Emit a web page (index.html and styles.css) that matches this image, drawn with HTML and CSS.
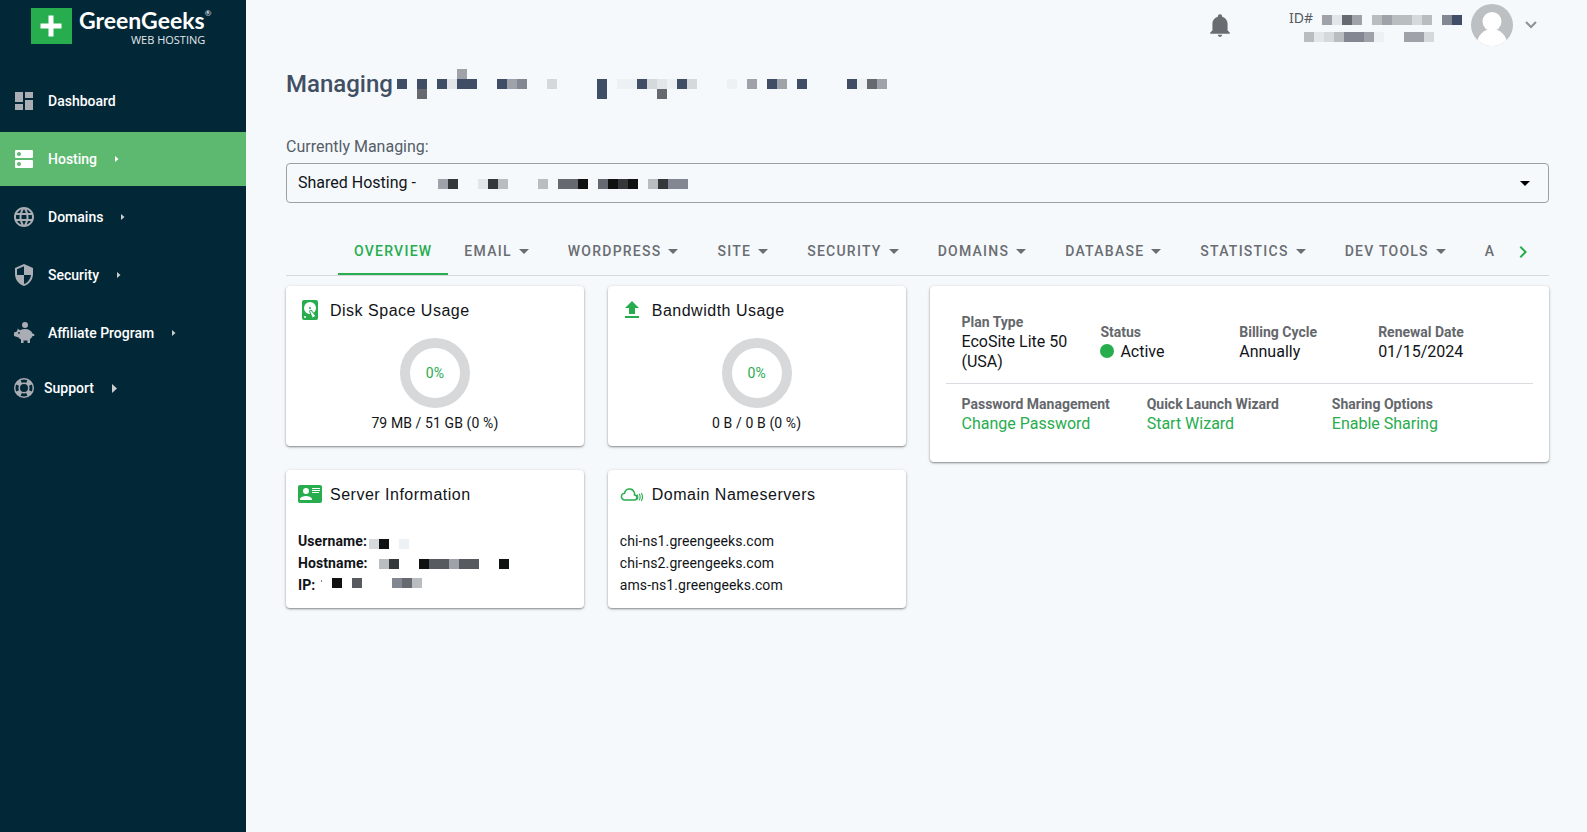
FILE: index.html
```html
<!DOCTYPE html>
<html lang="en">
<head>
<meta charset="utf-8">
<meta name="viewport" content="width=device-width, initial-scale=1">
<title>GreenGeeks – Hosting</title>
<link rel="stylesheet" href="styles.css">
</head>
<body>
<div class="app">
  <aside class="sidebar">
    <a class="brand" href="#">
      <svg class="brand-mark" viewBox="0 0 41 36" aria-hidden="true"><rect width="41" height="36" fill="#27ac4e"/><path d="M17.500 7.500h5v8h8v5h-8v8h-5v-8h-8v-5h8z" fill="#fff"/></svg>
      <span class="brand-text">
        <span class="brand-name">GreenGeeks<span class="brand-reg">®</span></span>
        <span class="brand-sub">WEB HOSTING</span>
      </span>
    </a>
    <nav class="menu">
      <a class="menu-item" href="#">
        <svg class="icon" viewBox="0 0 24 24"><path d="M3 13h8V3H3v10zm0 8h8v-6H3v6zm10 0h8V11h-8v10zm0-18v6h8V3h-8z"/></svg>
        <span>Dashboard</span>
      </a>
      <a class="menu-item active" href="#">
        <svg class="icon" viewBox="0 0 24 24"><path fill-rule="evenodd" d="M4 3h16a1 1 0 0 1 1 1v6a1 1 0 0 1-1 1H4a1 1 0 0 1-1-1V4a1 1 0 0 1 1-1zM7 5a2 2 0 1 0 0 4 2 2 0 0 0 0-4zM4 13h16a1 1 0 0 1 1 1v6a1 1 0 0 1-1 1H4a1 1 0 0 1-1-1v-6a1 1 0 0 1 1-1zM7 15a2 2 0 1 0 0 4 2 2 0 0 0 0-4z"/></svg>
        <span>Hosting</span>
        <svg class="arrow" viewBox="0 0 4 6"><path d="M0 0l3.500 3L0 6z"/></svg>
      </a>
      <a class="menu-item" href="#">
        <svg class="icon" viewBox="0 0 24 24"><path d="M11.990 2C6.470 2 2 6.480 2 12s4.470 10 9.990 10C17.520 22 22 17.520 22 12S17.520 2 11.990 2zm6.930 6h-2.950c-.32-1.250-.78-2.450-1.380-3.560 1.840.63 3.370 1.910 4.330 3.560zM12 4.040c.83 1.200 1.480 2.530 1.910 3.960h-3.820c.43-1.430 1.080-2.760 1.910-3.960zM4.260 14C4.100 13.360 4 12.690 4 12s.1-1.360.26-2h3.380c-.08.66-.14 1.320-.14 2 0 .68.06 1.340.14 2H4.260zm.82 2h2.950c.32 1.250.78 2.450 1.380 3.560-1.840-.63-3.370-1.900-4.330-3.560zm2.950-8H5.080c.96-1.660 2.490-2.930 4.330-3.560C8.810 5.550 8.350 6.750 8.030 8zM12 19.960c-.83-1.200-1.480-2.530-1.910-3.960h3.820c-.43 1.430-1.080 2.760-1.910 3.960zM14.340 14H9.660c-.09-.66-.16-1.320-.16-2 0-.68.07-1.350.16-2h4.680c.09.65.16 1.320.16 2 0 .68-.07 1.340-.16 2zm.25 5.560c.6-1.110 1.060-2.310 1.380-3.560h2.950c-.96 1.650-2.490 2.930-4.330 3.560zM16.360 14c.08-.66.14-1.320.14-2 0-.68-.06-1.340-.14-2h3.380c.16.64.26 1.310.26 2s-.1 1.360-.26 2h-3.380z"/></svg>
        <span>Domains</span>
        <svg class="arrow" viewBox="0 0 4 6"><path d="M0 0l3.500 3L0 6z"/></svg>
      </a>
      <a class="menu-item" href="#">
        <svg class="icon" viewBox="0 0 24 24"><path d="M12 1L3 5v6c0 5.550 3.840 10.740 9 12 5.160-1.260 9-6.450 9-12V5l-9-4zm0 10.990h7c-.53 4.120-3.280 7.790-7 8.940V12H5V6.300l7-3.110v8.800z"/></svg>
        <span>Security</span>
        <svg class="arrow" viewBox="0 0 4 6"><path d="M0 0l3.500 3L0 6z"/></svg>
      </a>
      <a class="menu-item" href="#">
        <svg class="icon" viewBox="0 0 24 24"><circle cx="13" cy="4" r="3"/><path fill-rule="evenodd" d="M5.500 7.500 8 9.200C9.500 8.400 11.200 8 13 8c3.600 0 6.600 1.800 7.500 4.500l1.800.7V15h-1.800c-.5 1.400-1.500 2.400-2.500 3.100V22h-2.500v-2.500h-4V22H9v-3.500c-1-.6-1.800-1.300-2.400-2.100L2 15v-3.500l2.500-.8C4.800 10 5.200 9.500 5.700 9zM7 11a.9.900 0 1 0 0 1.800A.9.900 0 0 0 7 11z"/></svg>
        <span>Affiliate Program</span>
        <svg class="arrow" viewBox="0 0 4 6"><path d="M0 0l3.500 3L0 6z"/></svg>
      </a>
      <a class="menu-item compact" href="#">
        <svg class="icon" viewBox="0 0 24 24"><path d="M19.790 15.410C20.740 13.240 20.740 10.750 19.790 8.590L17.050 9.830C17.650 11.210 17.650 12.780 17.060 14.170L19.790 15.410M15.420 4.210C13.250 3.260 10.760 3.260 8.590 4.210L9.830 6.940C11.220 6.350 12.790 6.350 14.180 6.950L15.420 4.210M4.210 8.580C3.260 10.760 3.260 13.240 4.210 15.420L6.950 14.170C6.350 12.790 6.350 11.210 6.950 9.820L4.210 8.580M8.590 19.790C10.760 20.740 13.250 20.740 15.420 19.780L14.180 17.050C12.800 17.650 11.220 17.650 9.840 17.060L8.590 19.790M12 2A10 10 0 0 1 22 12A10 10 0 0 1 12 22A10 10 0 0 1 2 12A10 10 0 0 1 12 2M12 8A4 4 0 0 0 8 12A4 4 0 0 0 12 16A4 4 0 0 0 16 12A4 4 0 0 0 12 8Z"/></svg>
        <span>Support</span>
        <svg class="arrow big" viewBox="0 0 5 9"><path d="M0 0l5 4.500L0 9z"/></svg>
      </a>
    </nav>
  </aside>

  <main class="main">
    <header class="topbar">
      <button class="icon-button bell" type="button" aria-label="Notifications">
        <svg viewBox="0 0 24 24"><path d="M21 19v1H3v-1l2-2v-6c0-3.100 2.030-5.830 5-6.710V4a2 2 0 0 1 4 0v.29c2.970.88 5 3.610 5 6.710v6l2 2m-7 2a2 2 0 0 1-4 0"/></svg>
      </button>
      <div class="account">
        <div class="account-id">ID#
          <svg class="mosaic" width="140" height="10"><rect class="g4" width="10" height="10"/><rect class="g1" x="10" width="10" height="10"/><rect class="g6" x="20" width="10" height="10"/><rect class="g4" x="30" width="10" height="10"/><rect class="g3" x="50" width="10" height="10"/><rect class="g4" x="60" width="10" height="10"/><rect class="g3" x="70" width="20" height="10"/><rect class="g2" x="90" width="10" height="10"/><rect class="g3" x="100" width="10" height="10"/><rect class="g5" x="120" width="10" height="10"/><rect class="navy" x="130" width="10" height="10"/></svg>
        </div>
        <svg class="mosaic account-name" width="130" height="10"><rect class="g3" width="10" height="10"/><rect class="g1" x="10" width="10" height="10"/><rect class="g2" x="20" width="10" height="10"/><rect class="g3" x="30" width="10" height="10"/><rect class="g5" x="40" width="20" height="10"/><rect class="g4" x="60" width="10" height="10"/><rect class="g0" x="70" width="10" height="10"/><rect class="g4" x="100" width="20" height="10"/><rect class="g2" x="120" width="10" height="10"/></svg>
      </div>
      <button class="icon-button profile" type="button" aria-label="Account menu">
        <svg class="avatar" viewBox="0 0 42 42"><clipPath id="face"><circle cx="21" cy="21" r="21"/></clipPath><g clip-path="url(#face)"><rect width="42" height="42" fill="#bdc0c2"/><circle cx="21" cy="17.500" r="9.500" fill="#fff"/><ellipse cx="21" cy="40" rx="15" ry="15" fill="#fff"/></g></svg>
        <svg class="chevron" viewBox="0 0 12 8"><path d="M1 1l5 5 5-5"/></svg>
      </button>
    </header>

    <div class="content">
      <h1 class="page-title">Managing
        <svg class="mosaic" width="490" height="30"><g class="navy"><rect y="10" width="10" height="10"/><rect x="20" y="10" width="10" height="10"/><rect x="40" y="10" width="10" height="10"/><rect x="60" y="10" width="20" height="10"/><rect x="100" y="10" width="10" height="10"/><rect x="200" y="10" width="10" height="20"/><rect x="240" y="10" width="10" height="10"/><rect x="280" y="10" width="10" height="10"/><rect x="370" y="10" width="10" height="10"/><rect x="400" y="10" width="10" height="10"/><rect x="450" y="10" width="10" height="10"/></g><g class="g6"><rect x="20" y="20" width="10" height="10"/><rect x="260" y="20" width="10" height="10"/><rect x="470" y="10" width="10" height="10"/></g><g class="g4"><rect x="60" width="10" height="10"/><rect x="110" y="10" width="10" height="10"/><rect x="350" y="10" width="10" height="10"/><rect x="380" y="10" width="10" height="10"/><rect x="480" y="10" width="10" height="10"/></g><rect class="g5" x="120" y="10" width="10" height="10"/><g class="g2"><rect x="150" y="10" width="10" height="10"/><rect x="250" y="10" width="10" height="10"/><rect x="290" y="10" width="10" height="10"/></g><rect class="g1" x="50" y="10" width="10" height="10"/><rect class="g1" x="260" y="10" width="10" height="10"/><g class="g0"><rect x="220" y="10" width="20" height="10"/><rect x="270" y="10" width="10" height="10"/><rect x="330" y="10" width="10" height="10"/><rect x="460" y="10" width="10" height="10"/></g></svg>
      </h1>

      <label class="picker-label" for="service">Currently Managing:</label>
      <div class="picker">
        <select id="service" class="picker-select"><option>Shared Hosting -</option></select>
        <svg class="mosaic picker-mask" width="250" height="10"><rect class="g4" width="10" height="10"/><rect class="k1" x="10" width="10" height="10"/><rect class="g1" x="40" width="10" height="10"/><rect class="k1" x="50" width="10" height="10"/><rect class="g3" x="60" width="10" height="10"/><rect class="g3" x="100" width="10" height="10"/><rect class="g6" x="120" width="20" height="10"/><rect class="k0" x="140" width="10" height="10"/><rect class="g6" x="160" width="10" height="10"/><rect class="k0" x="170" width="10" height="10"/><rect class="k1" x="180" width="10" height="10"/><rect class="k0" x="190" width="10" height="10"/><rect class="g3" x="210" width="10" height="10"/><rect class="k1" x="220" width="10" height="10"/><rect class="g5" x="230" width="20" height="10"/></svg>
        <svg class="picker-caret" viewBox="0 0 10 5"><path d="M0 0h10L5 5z"/></svg>
      </div>

      <nav class="tabs">
        <div class="tab-strip">
          <button class="tab selected" type="button">OVERVIEW</button>
          <button class="tab" type="button">EMAIL<svg class="caret" viewBox="0 0 24 24"><path d="M7 10l5 5 5-5z"/></svg></button>
          <button class="tab" type="button">WORDPRESS<svg class="caret" viewBox="0 0 24 24"><path d="M7 10l5 5 5-5z"/></svg></button>
          <button class="tab" type="button">SITE<svg class="caret" viewBox="0 0 24 24"><path d="M7 10l5 5 5-5z"/></svg></button>
          <button class="tab" type="button">SECURITY<svg class="caret" viewBox="0 0 24 24"><path d="M7 10l5 5 5-5z"/></svg></button>
          <button class="tab" type="button">DOMAINS<svg class="caret" viewBox="0 0 24 24"><path d="M7 10l5 5 5-5z"/></svg></button>
          <button class="tab" type="button">DATABASE<svg class="caret" viewBox="0 0 24 24"><path d="M7 10l5 5 5-5z"/></svg></button>
          <button class="tab" type="button">STATISTICS<svg class="caret" viewBox="0 0 24 24"><path d="M7 10l5 5 5-5z"/></svg></button>
          <button class="tab" type="button">DEV TOOLS<svg class="caret" viewBox="0 0 24 24"><path d="M7 10l5 5 5-5z"/></svg></button>
          <button class="tab" type="button">A</button>
        </div>
        <button class="tab-next" type="button" aria-label="More tabs"><svg viewBox="0 0 24 24"><path d="M8.590 16.590L13.170 12 8.590 7.410 10 6l6 6-6 6-1.410-1.410z"/></svg></button>
      </nav>

      <div class="cards">
        <section class="card">
          <h2 class="card-title"><svg class="icon" viewBox="0 0 24 24"><path d="M6 2H18A2 2 0 0 1 20 4V20A2 2 0 0 1 18 22H6A2 2 0 0 1 4 20V4A2 2 0 0 1 6 2M12 4A6 6 0 0 0 6 10C6 13.310 8.690 16 12.100 16L11.220 13.770C10.950 13.290 11.110 12.680 11.590 12.400L12.450 11.900C12.930 11.630 13.540 11.790 13.820 12.270L15.740 14.690C17.120 13.590 18 11.900 18 10A6 6 0 0 0 12 4M12 9A1 1 0 0 1 13 10A1 1 0 0 1 12 11A1 1 0 0 1 11 10A1 1 0 0 1 12 9M7 18A1 1 0 0 0 6 19A1 1 0 0 0 7 20A1 1 0 0 0 8 19A1 1 0 0 0 7 18M12.090 13.270L14.580 19.580L17.170 18.080L12.950 12.770L12.090 13.270Z"/></svg>Disk Space Usage</h2>
          <div class="gauge">0%</div>
          <p class="usage">79 MB / 51 GB (0 %)</p>
        </section>

        <section class="card">
          <h2 class="card-title"><svg class="icon" viewBox="0 0 24 24"><path d="M9 16V10H5L12 3L19 10H15V16H9M5 20V18H19V20H5Z"/></svg>Bandwidth Usage</h2>
          <div class="gauge">0%</div>
          <p class="usage">0 B / 0 B (0 %)</p>
        </section>

        <section class="card plan">
          <div class="plan-row four">
            <div><h3>Plan Type</h3><p>EcoSite Lite 50 (USA)</p></div>
            <div><h3>Status</h3><p class="status"><span class="dot"></span>Active</p></div>
            <div><h3>Billing Cycle</h3><p>Annually</p></div>
            <div><h3>Renewal Date</h3><p>01/15/2024</p></div>
          </div>
          <div class="plan-row three">
            <div><h3>Password Management</h3><a href="#">Change Password</a></div>
            <div><h3>Quick Launch Wizard</h3><a href="#">Start Wizard</a></div>
            <div><h3>Sharing Options</h3><a href="#">Enable Sharing</a></div>
          </div>
        </section>

        <section class="card">
          <h2 class="card-title"><svg class="icon" viewBox="0 0 24 24"><path fill-rule="evenodd" d="M2 3h20a2 2 0 0 1 2 2v14a2 2 0 0 1-2 2H2a2 2 0 0 1-2-2V5a2 2 0 0 1 2-2zM14 6v1h8V6zM14 8v1h8V8zM14 10v1h7v-1zM8 6a3 3 0 1 0 0 6 3 3 0 0 0 0-6zM2 17v1h12v-1c0-2-4-3.100-6-3.100S2 15 2 17z"/></svg>Server Information</h2>
          <dl class="details">
            <div><dt>Username:</dt><dd><svg class="mosaic" width="40" height="22"><rect class="g2" y="9" width="10" height="10"/><rect class="k0" x="10" y="9" width="10" height="10"/><rect class="g0" x="30" y="9" width="10" height="10"/></svg></dd></div>
            <div><dt>Hostname:</dt><dd><svg class="mosaic" width="140" height="22"><rect class="g3" x="9" y="7" width="10" height="10"/><rect class="k1" x="19" y="7" width="10" height="10"/><rect class="k0" x="49" y="7" width="10" height="10"/><rect class="g7" x="59" y="7" width="20" height="10"/><rect class="g4" x="79" y="7" width="10" height="10"/><rect class="g7" x="89" y="7" width="20" height="10"/><rect class="k0" x="129" y="7" width="10" height="10"/></svg></dd></div>
            <div><dt>IP:</dt><dd><svg class="mosaic" width="108" height="22"><rect class="g5" x="4" y="6" width="1" height="2"/><rect class="k0" x="15" y="4" width="10" height="10"/><rect class="g7" x="35" y="4" width="10" height="10"/><rect class="g5" x="75" y="4" width="10" height="10"/><rect class="g6" x="85" y="4" width="10" height="10"/><rect class="g3" x="95" y="4" width="10" height="10"/></svg></dd></div>
          </dl>
        </section>

        <section class="card">
          <h2 class="card-title"><svg class="icon line" viewBox="0 0 24 24"><path d="M15 18H5a3.400 3.400 0 0 1-.4-6.800 5 5 0 0 1 9.500-1.200c.5.900.6 1.900.4 2.900a2.600 2.600 0 0 1 .5 5.100z"/><path d="M17.200 12.500c.8 1.500.8 3.500 0 5M19.300 11.700c1.100 2.100 1.100 4.500 0 6.600M21.400 11c1.400 2.600 1.400 5.400 0 8" stroke-width="1.100"/></svg>Domain Nameservers</h2>
          <ul class="nameservers">
            <li>chi-ns1.greengeeks.com</li>
            <li>chi-ns2.greengeeks.com</li>
            <li>ams-ns1.greengeeks.com</li>
          </ul>
        </section>
      </div>
    </div>
  </main>
</div>
</body>
</html>
```
FILE: styles.css
```css
:root {
  --green: #27ac4e;
  --ink: #111418;
  --slate: #414f63;
  --muted: #6a6d72;
  --page: #f5f9fc;
}

* { box-sizing: border-box; }

body {
  margin: 0;
  background: var(--page);
  color: var(--ink);
  font-family: Roboto, "Liberation Sans", sans-serif;
  font-size: 14px;
  line-height: 20px;
}

h1, h2, h3, p, ul, dl, dd { margin: 0; padding: 0; }
a { color: inherit; text-decoration: none; }
button { padding: 0; border: 0; background: none; color: inherit; font: inherit; }
svg { display: block; flex: none; }

.app { display: flex; min-height: 100vh; }

/* Sidebar */
.sidebar { flex: 0 0 246px; background: #022838; color: #fff; }
.brand { display: flex; gap: 7px; height: 74px; padding: 8px 0 0 31px; }
.brand-mark { width: 41px; height: 36px; }
.brand-text { display: flex; flex-direction: column; align-items: flex-end; font-family: "Open Sans", "Noto Sans", sans-serif; }
.brand-name { display: flex; font-family: Lato, "Open Sans", sans-serif; font-size: 23px; line-height: 25px; font-weight: 700; }
.brand-reg { font-size: 8px; line-height: 10px; font-weight: 400; }
.brand-sub { padding: 1px 6px 0 0; font-size: 11px; line-height: 12px; color: #e4e7e9; }

.menu { display: flex; flex-direction: column; gap: 4px; }
.menu-item { display: flex; align-items: center; height: 54px; padding-left: 12px; font-weight: 500; }
.menu-item.active { background: #5db970; }
.menu-item.compact { height: 48px; }
.icon { width: 24px; height: 24px; margin-right: 12px; fill: #abadb5; }
.active .icon, .active .arrow { fill: #fff; }
.compact .icon { margin-right: 8px; }
.arrow { width: 4px; height: 6px; margin-left: 18px; fill: #c9cdd0; }
.arrow.big { width: 5px; height: 9px; }

/* Top bar */
.main { flex: 1; min-width: 0; }
.topbar { display: flex; justify-content: flex-end; height: 50px; padding-right: 50px; }
.icon-button { display: flex; align-items: center; }
.bell svg { width: 26px; height: 26px; fill: #696c70; }
.account { margin-left: 56px; padding-top: 8px; color: #565a60; font-family: "Noto Sans", sans-serif; }
.account-id { display: flex; align-items: center; gap: 9px; }
.account-id .mosaic { margin-top: 4px; }
.account-name { margin: 4px 0 0 15px; }
.profile { gap: 12px; margin-left: 9px; }
.avatar { width: 42px; height: 42px; }
.chevron { width: 12px; height: 8px; fill: none; stroke: #8d9196; stroke-width: 2; }

/* Page content */
.content { padding: 19px 38px 40px 40px; }
.page-title { display: flex; align-items: center; gap: 4px; height: 30px; color: var(--slate); font-size: 24px; font-weight: 500; }
.picker-label { display: block; margin-top: 38px; color: #565d68; font-size: 16px; }
.picker { position: relative; margin-top: 6px; }
.picker-select { appearance: none; display: block; width: 100%; height: 40px; padding: 0 11px; border: 1px solid #9da0a4; border-radius: 4px; background: transparent; color: var(--ink); font: inherit; font-size: 16px; }
.picker-mask { position: absolute; left: 152px; top: 16px; pointer-events: none; }
.picker-caret { position: absolute; right: 19px; top: 18px; width: 10px; height: 5px; pointer-events: none; }

/* Tabs */
.tabs { display: flex; height: 48px; margin-top: 25px; padding-left: 52px; border-bottom: 1px solid #d5d9dd; }
.tab-strip { display: flex; flex: 1; min-width: 0; overflow: hidden; }
.tab { display: flex; flex: none; align-items: center; padding: 0 16px; border-bottom: 2px solid transparent; color: var(--muted); font-weight: 500; letter-spacing: 1.25px; }
.tab.selected { border-color: var(--green); color: var(--green); }
.caret { width: 24px; height: 24px; fill: var(--muted); }
.tab-next { display: flex; align-items: center; justify-content: center; width: 52px; }
.tab-next svg { width: 24px; height: 24px; fill: var(--green); }

/* Cards */
.cards { display: grid; grid-template-columns: repeat(12, minmax(0, 1fr)); gap: 24px; align-items: start; margin-top: 10px; }
.card { grid-column: span 3; padding: 12px; border-radius: 4px; background: #fff; box-shadow: 0 1px 2px rgba(0, 0, 0, .4), 0 1px 4px rgba(0, 0, 0, .1); letter-spacing: 0.1px; }
.card-title { display: flex; align-items: flex-start; height: 24px; font-family: "Liberation Sans", sans-serif; font-size: 16px; line-height: 26px; font-weight: 400; letter-spacing: 0.5px; }
.card-title .icon { margin-right: 8px; fill: var(--green); }
.card-title .icon.line { fill: none; stroke: var(--green); stroke-width: 1.5; }
.gauge { display: flex; align-items: center; justify-content: center; width: 70px; height: 70px; margin: 16px auto 4px; border: 10px solid #d6d8da; border-radius: 50%; color: var(--green); }
.usage { line-height: 22px; text-align: center; }

.plan { grid-column: span 6; grid-row: span 2; padding: 12px 16px 28px; letter-spacing: 0; }
.plan-row { display: grid; align-items: center; padding: 14px 16px 11px; }
.plan-row h3 { color: #64676c; font-size: 14px; font-weight: 700; }
.plan-row p, .plan-row a { font-size: 16px; }
.plan-row a { color: var(--green); }
.four { grid-template-columns: repeat(4, 1fr); border-bottom: 1px solid #d8dce0; }
.three { grid-template-columns: repeat(3, 1fr); padding: 10px 16px 0; }
.status { display: flex; align-items: center; gap: 6px; }
.dot { width: 14px; height: 14px; margin-bottom: 2px; border-radius: 50%; background: var(--green); }

.details, .nameservers { margin-top: 24px; line-height: 22px; list-style: none; }
.details div { display: flex; align-items: center; gap: 2px; height: 22px; }
.details dt { font-weight: 700; }

/* Masked text blocks */
.g0 { fill: #eef1f3; }
.g1 { fill: #e3e6e8; }
.g2 { fill: #d6d9db; }
.g3 { fill: #b9bdc0; }
.g4 { fill: #9fa3a9; }
.g5 { fill: #838791; }
.g6 { fill: #666a70; }
.g7 { fill: #575b5f; }
.k0 { fill: #101212; }
.k1 { fill: #34383a; }
.navy { fill: #404e65; }
```
